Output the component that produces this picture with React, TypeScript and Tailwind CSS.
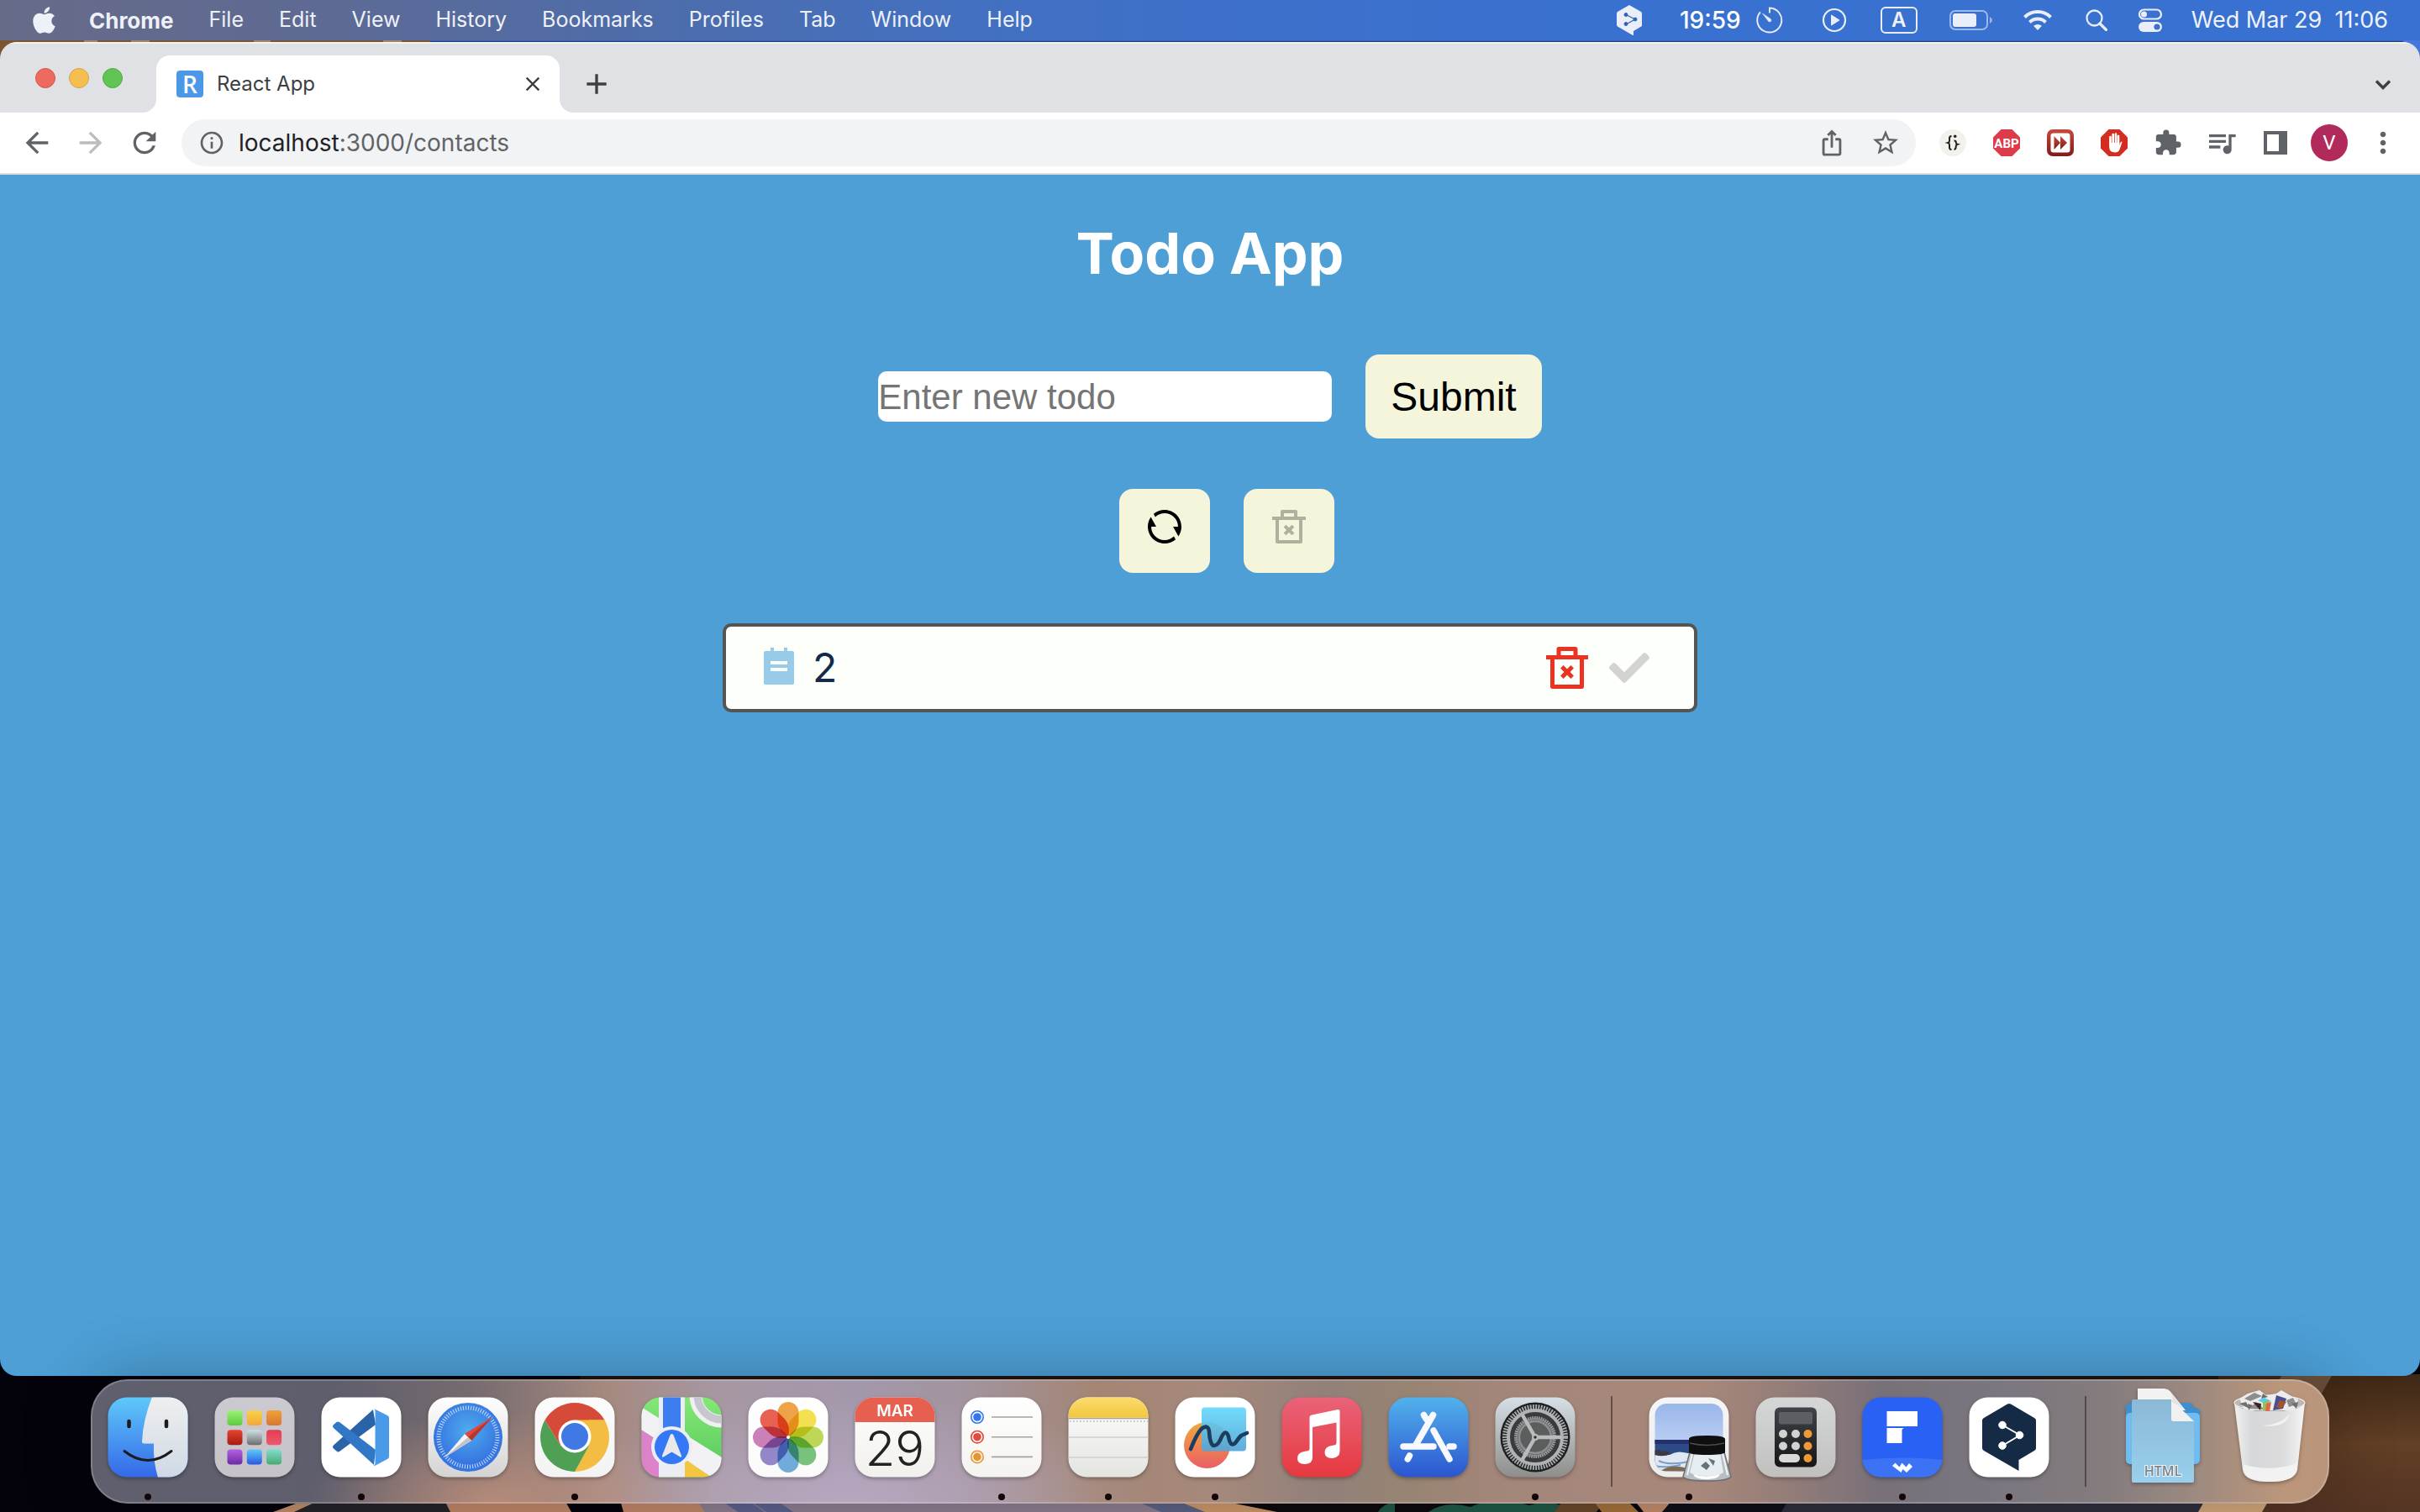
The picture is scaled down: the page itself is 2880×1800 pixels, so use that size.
import type { ReactNode } from "react";
import { FaApple, FaCheck } from "react-icons/fa";
import {
  MdAdd,
  MdArrowBack,
  MdArrowForward,
  MdClose,
  MdExtension,
  MdInfoOutline,
  MdIosShare,
  MdMoreVert,
  MdQueueMusic,
  MdRefresh,
  MdStarBorder,
} from "react-icons/md";
import { RiDeleteBin2Line, RiRefreshLine, RiTodoFill } from "react-icons/ri";

const menus = ["File", "Edit", "View", "History", "Bookmarks", "Profiles", "Tab", "Window", "Help"];

function Wallpaper() {
  return (
    <svg
      aria-hidden="true"
      className="absolute inset-0 -z-10 h-full w-full"
      viewBox="0 0 2880 1800"
      preserveAspectRatio="none"
    >
      <defs>
        <linearGradient id="wpRight" x1="0" y1="0" x2="0" y2="1">
          <stop offset="0" stopColor="#3d2715" />
          <stop offset="0.5" stopColor="#623f25" />
          <stop offset="1" stopColor="#543424" />
        </linearGradient>
      </defs>
      <rect width="2880" height="1800" fill="#04030c" />
      <rect width="512" height="90" fill="#7d5430" />
      <rect x="512" width="2368" height="49" fill="#3f63b0" />
      <rect x="512" y="49" width="2368" height="60" fill="#1f3a78" />
      <path d="M2860 40h20v60h-20z" fill="#4576dc" />
      <path d="M100 40h16v12h-16zM156 40h22v12h-22zM302 40h20v12h-20zM456 40h22v12h-22z" fill="#a58663" />
      <path d="M690 1636H2880V1650H690z" fill="#22150d" />
      <path d="M2640 1636H2880V1800H2640z" fill="url(#wpRight)" />
      <path d="M2716 1636h60l-34 60h-60z" fill="#6b513c" />
      <path d="M325 1800l38-14h60l-40 14z" fill="#c4906b" />
      <path d="M350 1800l30-14h150l6 14z" fill="#26242b" />
      <path d="M529 1786h320v14H536z" fill="#c4896a" />
      <path d="M672 1786h66l4 14h-62z" fill="#04030c" />
      <path d="M830 1786h600v14H838z" fill="#8f8093" />
      <path d="M858 1786h32l20 14h-32zM892 1786h32l20 14h-32z" fill="#5d6390" />
      <path d="M1350 1786h60l50 14h-78z" fill="#5f6487" />
      <path d="M1400 1786h60l70 14h-96z" fill="#d09a6c" />
      <path d="M1450 1786h440v14h-370z" fill="#0e0b10" />
      <path d="M1700 1800q20-14 50-6q30-14 70-2q30-10 50 8zM1640 1800q6-10 20-12v12z" fill="#1f5a48" />
      <path d="M1860 1786h50l-10 14h-50z" fill="#6b4a2b" />
      <path d="M1896 1786h40l14 14h-44z" fill="#a8743e" />
      <path d="M1945 1786h45l-10 14h-24z" fill="#c58f6c" />
      <path d="M1990 1786h140l-6 14h-146z" fill="#10101a" />
      <path d="M2128 1786h500v14h-508z" fill="#2f303d" />
      <path d="M2624 1786h76l-8 14h-76z" fill="#d5a97c" />
    </svg>
  );
}

function DeeplMark() {
  return (
    <svg viewBox="0 0 30 36" className="h-9 w-[30px]" aria-hidden="true">
      <path d="M15 0l14 8q1 1 1 2v15l-10 6v5.500L1 25.500q-1-1-1-2V10q0-1 1-2z" fill="#e9eef8" />
      <g fill="#2f62ba" stroke="#2f62ba">
        <path d="M11 11.500l11 5.500-11 6" fill="none" strokeWidth="1.200" />
        <circle cx="11" cy="11.500" r="2" />
        <circle cx="22" cy="17" r="2" />
        <circle cx="11" cy="22.500" r="2" />
      </g>
    </svg>
  );
}

function StatusIcons() {
  return (
    <>
      <button type="button" aria-label="Timer" className="flex items-center gap-[18px] text-[28px] font-medium text-white">
        19:59
        <svg viewBox="0 0 32 32" className="h-8 w-8" fill="none" stroke="#e9eef8" aria-hidden="true">
          <path d="M16 7.500V1.500a14.500 14.500 0 1 1-11 4.800" strokeWidth="1.900" />
          <path d="M7.500 8l10 6.800a2 2 0 0 1-2.800 2.800z" fill="#e9eef8" strokeWidth="0.500" />
        </svg>
      </button>
      <button type="button" aria-label="Now playing" className="ml-[46px]">
        <svg viewBox="0 0 30 30" className="h-[30px] w-[30px]" aria-hidden="true">
          <circle cx="15" cy="15" r="13" fill="none" stroke="#e9eef8" strokeWidth="2.200" />
          <path d="M11.500 9v12l9.500-6z" fill="#e9eef8" stroke="#e9eef8" strokeLinejoin="round" />
        </svg>
      </button>
      <button
        type="button"
        aria-label="Input source"
        className="ml-10 flex h-8 w-11 items-center justify-center rounded-md border-2 border-[#e9eef8] text-[24px] leading-none font-semibold"
      >
        A
      </button>
      <button type="button" aria-label="Battery" className="ml-[38px]">
        <svg viewBox="0 0 52 24" className="h-6 w-[52px]" aria-hidden="true">
          <rect x="1" y="1" width="44" height="22" rx="6" fill="none" stroke="#9db8e8" strokeWidth="2" />
          <rect x="4" y="4" width="28" height="16" rx="3" fill="#e9eef8" />
          <path d="M48 8q6 4 0 8z" fill="#9db8e8" />
        </svg>
      </button>
      <button type="button" aria-label="Wi-Fi" className="ml-9">
        <svg viewBox="0 0 34 26" className="h-[26px] w-[34px]" fill="none" stroke="#e9eef8" strokeWidth="4" aria-hidden="true">
          <path d="M1.500 9.500a22 22 0 0 1 31 0" />
          <path d="M7.500 15.500a13.500 13.500 0 0 1 19 0" />
          <path d="M17 25l-5-5.200q5-3.600 10 0z" fill="#e9eef8" stroke="none" />
        </svg>
      </button>
      <button type="button" aria-label="Search" className="ml-10">
        <svg viewBox="0 0 26 26" className="h-[26px] w-[26px]" fill="none" stroke="#e9eef8" aria-hidden="true">
          <circle cx="10.500" cy="10.500" r="9" strokeWidth="2.300" />
          <path d="M17 17l7.500 7.500" strokeWidth="3.200" strokeLinecap="round" />
        </svg>
      </button>
      <button type="button" aria-label="Control Center" className="ml-9">
        <svg viewBox="0 0 30 28" className="h-7 w-[30px]" aria-hidden="true">
          <rect x="2" y="1.500" width="26" height="11" rx="5.500" fill="none" stroke="#e9eef8" strokeWidth="2.200" />
          <circle cx="7.500" cy="7" r="3.500" fill="#e9eef8" />
          <rect x="1" y="16" width="28" height="12" rx="6" fill="#e9eef8" />
          <circle cx="23" cy="22" r="3.600" fill="#3871d1" />
        </svg>
      </button>
    </>
  );
}

function MenuBar() {
  return (
    <header className="flex h-12 shrink-0 items-center justify-between bg-[linear-gradient(90deg,#666b88_0%,#5f6a92_12%,#4e6ca9_26%,#4470be_38%,#3e70ca_50%,#3971d0_66%,#3871d1_100%)] pr-[38px] pl-[39px] text-[25px] text-[#eef1f7] [text-shadow:0_3px_6px_rgba(0,0,0,0.25)]">
      <nav aria-label="Menu bar" className="flex items-center gap-[42px]">
        <button type="button" aria-label="Apple menu" className="-mr-[2px]">
          <FaApple className="h-9 w-[27px]" />
        </button>
        <button type="button" className="text-[26px] font-bold">
          Chrome
        </button>
        {menus.map((m) => (
          <button key={m} type="button">
            {m}
          </button>
        ))}
      </nav>
      <div className="flex items-center">
        <button type="button" aria-label="DeepL" className="mr-[45px]">
          <DeeplMark />
        </button>
        <StatusIcons />
        <button type="button" className="ml-[34px] text-[27px] whitespace-pre">
          {"Wed Mar 29  11:06"}
        </button>
      </div>
    </header>
  );
}

function TabStrip() {
  return (
    <div className="flex h-[84px] shrink-0 items-end justify-between border-t-2 border-[#f1f2f4] bg-[#dfe1e5]">
      <div className="flex h-full items-end">
        <div className="mb-[29px] ml-[42px] flex gap-4">
          <button type="button" aria-label="Close window" className="h-6 w-6 rounded-full border border-[#d35549] bg-[#ed6a5e]" />
          <button type="button" aria-label="Minimize window" className="h-6 w-6 rounded-full border border-[#d8a243] bg-[#f4bf4f]" />
          <button type="button" aria-label="Zoom window" className="h-6 w-6 rounded-full border border-[#4fab40] bg-[#61c554]" />
        </div>
        <svg className="ml-6 h-4 w-4" viewBox="0 0 16 16" aria-hidden="true">
          <path d="M16 0v16H0A16 16 0 0 0 16 0z" fill="#fff" />
        </svg>
        <div className="flex h-[68px] w-[480px] items-center rounded-t-2xl bg-white pr-[18px] pl-6">
          <span className="flex h-8 w-8 items-center justify-center rounded-sm bg-[#4b98e8] font-['Open_Sans'] text-[28px] leading-none font-semibold text-white">
            R
          </span>
          <span className="ml-4 flex-1 text-[24px] text-[#3c4043]">React App</span>
          <button type="button" aria-label="Close tab" className="text-[#3c4043]">
            <MdClose className="h-7 w-7" />
          </button>
        </div>
        <svg className="h-4 w-4" viewBox="0 0 16 16" aria-hidden="true">
          <path d="M0 0v16h16A16 16 0 0 1 0 0z" fill="#fff" />
        </svg>
        <button type="button" aria-label="New tab" className="mb-[14px] ml-2 text-[#3c4043]">
          <MdAdd className="h-10 w-10" />
        </button>
      </div>
      <button type="button" aria-label="Search tabs" className="mr-[34px] mb-[27px]">
        <svg viewBox="0 0 20 12" className="h-3 w-5" fill="none" stroke="#3c4043" strokeWidth="3.400" aria-hidden="true">
          <path d="M2 1.500l8 8 8-8" />
        </svg>
      </button>
    </div>
  );
}

const octagon = "M9.500 0h13L32 9.500v13L22.500 32h-13L0 22.500v-13z";

function Extension({ label, children }: { label: string; children: ReactNode }) {
  return (
    <button type="button" aria-label={label} className="flex w-16 items-center justify-center text-[#5f6368]">
      {children}
    </button>
  );
}

function Toolbar() {
  return (
    <div className="flex h-[74px] shrink-0 items-center border-b-2 border-[#dadce0] bg-white pr-3 pl-3">
      <Extension label="Back">
        <MdArrowBack className="h-10 w-10" />
      </Extension>
      <Extension label="Forward">
        <MdArrowForward className="h-10 w-10 text-[#babcbe]" />
      </Extension>
      <Extension label="Reload">
        <MdRefresh className="h-10 w-10" />
      </Extension>
      <div className="ml-3 flex h-14 flex-1 items-center rounded-full bg-[#f1f3f4] pr-[18px] pl-5 text-[#5f6368]">
        <MdInfoOutline className="h-8 w-8 shrink-0" />
        <a href="#contacts" className="ml-4 flex-1 text-[28px]">
          <span className="text-[#202124]">localhost</span>:3000/contacts
        </a>
        <button type="button" aria-label="Share" className="mr-[29px]">
          <MdIosShare className="h-[34px] w-[34px]" />
        </button>
        <button type="button" aria-label="Bookmark this page">
          <MdStarBorder className="h-9 w-9" />
        </button>
      </div>
      <div className="ml-3 flex">
        <Extension label="JSON formatter">
          <svg viewBox="0 0 32 32" className="h-8 w-8">
            <circle cx="16" cy="16" r="16" fill="#f2f1ec" />
            <g fill="none" stroke="#222" strokeWidth="2">
              <path d="M14.500 8q-2.500 0-2.500 2.500v3q0 2-1.800 2.500 1.800.5 1.800 2.500v3q0 2.500 2.500 2.500" />
              <path d="M17.500 13.500q2.500 0 2.300 2.200 0 1.600 1.800 2.100-1.800.5-1.800 2.300 0 3.900-2.300 3.900" />
            </g>
            <circle cx="18.700" cy="8.200" r="1.800" fill="#222" />
          </svg>
        </Extension>
        <Extension label="Adblock Plus">
          <svg viewBox="0 0 32 32" className="h-8 w-8">
            <path d={octagon} fill="#dd3a4b" />
            <text x="16" y="21.500" fontSize="15" fontWeight="700" textAnchor="middle" fill="#fff" fontFamily="Roboto">
              ABP
            </text>
          </svg>
        </Extension>
        <Extension label="Fast forward">
          <svg viewBox="0 0 32 32" className="h-8 w-8">
            <defs>
              <linearGradient id="ffGrad" x1="0" y1="0" x2="0" y2="1">
                <stop offset="0" stopColor="#c8483c" />
                <stop offset="1" stopColor="#7d1c18" />
              </linearGradient>
            </defs>
            <rect width="32" height="32" rx="7" fill="url(#ffGrad)" />
            <rect x="4.500" y="4.500" width="23" height="23" rx="3" fill="#fff" />
            <path d="M8.500 8l7.500 8-7.500 8zM16 8l8 8-8 8z" fill="url(#ffGrad)" />
          </svg>
        </Extension>
        <Extension label="AdBlock">
          <svg viewBox="0 0 32 32" className="h-8 w-8">
            <path d={octagon} fill="#d32d20" />
            <g stroke="#fff" strokeWidth="2.600" strokeLinecap="round" fill="none">
              <path d="M11.500 9v9M14.700 6v11M18 5.500V17M21 8v10" />
            </g>
            <path d="M10.200 16h12v3l1.600-4q1.500-1.300 1.700.5l-3 8.500q-1.500 3.500-5.500 3.500-6.800 0-6.800-6.500z" fill="#fff" />
          </svg>
        </Extension>
        <Extension label="Extensions">
          <MdExtension className="h-[34px] w-[34px]" />
        </Extension>
        <Extension label="Media controls">
          <MdQueueMusic className="h-10 w-10" />
        </Extension>
        <Extension label="Side panel">
          <svg viewBox="0 0 28 28" className="h-7 w-7">
            <path d="M0 0h28v28H0zM4 4v20h14V4z" fill="#5f6368" fillRule="evenodd" />
          </svg>
        </Extension>
        <Extension label="Profile">
          <span className="flex h-11 w-11 items-center justify-center rounded-full bg-[#b02a5b] font-[Roboto] text-2xl text-white">
            V
          </span>
        </Extension>
        <Extension label="More">
          <MdMoreVert className="h-10 w-10" />
        </Extension>
      </div>
    </div>
  );
}

function TodoApp() {
  return (
    <main className="flex flex-1 flex-col items-center bg-[#4d9fd6] pt-12">
      <h1 className="text-[68px] leading-[90px] font-bold text-white">Todo App</h1>
      <form className="mt-[76px] flex items-center gap-10" onSubmit={(e) => e.preventDefault()}>
        <input
          type="text"
          aria-label="New todo"
          placeholder="Enter new todo"
          className="h-[60px] w-[540px] rounded-[10px] bg-white font-['Liberation_Sans'] text-[42px] text-black placeholder:text-[#757575]"
        />
        <button type="submit" className="h-[100px] rounded-2xl bg-[#f5f5dc] px-[30px] pt-[2px] font-['Liberation_Sans'] text-5xl text-black">
          Submit
        </button>
      </form>
      <div className="mt-[60px] flex gap-10 pl-10">
        <button type="button" aria-label="Reset todos" className="h-[100px] rounded-2xl bg-[#f5f5dc] px-[30px] pb-[10px] text-black">
          <RiRefreshLine className="h-12 w-12" />
        </button>
        <button
          type="button"
          disabled
          aria-label="Clear completed todos"
          className="h-[100px] rounded-2xl bg-[#f5f5dc] px-[30px] pb-[10px] text-[#b0b09f]"
        >
          <RiDeleteBin2Line className="h-12 w-12" />
        </button>
      </div>
      <ul className="mt-[60px] w-[1160px]">
        <li className="flex h-[106px] items-center rounded-[10px] border-4 border-[#555] bg-[#fcfffa] pr-[53px] pl-[39px]">
          <RiTodoFill className="h-12 w-12 shrink-0 text-[#98cbe9]" />
          <span className="ml-4 flex-1 text-5xl text-[#152a4a]">2</span>
          <button type="button" aria-label="Delete todo" className="text-[#ea3323]">
            <RiDeleteBin2Line className="h-[60px] w-[60px]" />
          </button>
          <button type="button" aria-label="Complete todo" className="ml-5 text-[#d3d3d3]">
            <FaCheck className="h-12 w-12" />
          </button>
        </li>
      </ul>
    </main>
  );
}

function Grad({ id, from, to }: { id: string; from: string; to: string }) {
  return (
    <linearGradient id={id} x1="0" y1="0" x2="0" y2="1">
      <stop offset="0" stopColor={from} />
      <stop offset="1" stopColor={to} />
    </linearGradient>
  );
}

function Tile({ id, from, to, children }: { id: string; from: string; to: string; children?: ReactNode }) {
  return (
    <svg viewBox="0 0 96 96" className="h-24 w-24 overflow-visible drop-shadow-[0_2px_2px_rgba(0,0,0,0.3)]" aria-hidden="true">
      <defs>
        <Grad id={id} from={from} to={to} />
        <clipPath id={`${id}Clip`}>
          <rect x="0.500" y="0.500" width="95" height="95" rx="22" />
        </clipPath>
      </defs>
      <g clipPath={`url(#${id}Clip)`}>
        <rect width="96" height="96" fill={`url(#${id})`} />
        {children}
      </g>
    </svg>
  );
}

function Finder() {
  return (
    <Tile id="finder" from="#5fc9fa" to="#3468e8">
      <defs>
        <Grad id="finderR" from="#efefef" to="#cfd9e6" />
      </defs>
      <path d="M53 0Q42 28 41 53q0 2.500 2.500 2.500H55Q54 76 60 96h36V0z" fill="url(#finderR)" />
      <g fill="none" stroke="#1c1c1e" strokeLinecap="round">
        <path d="M25.500 29v6M70 29v6" strokeWidth="4.500" />
        <path d="M20 64.500q28 22 56 0" strokeWidth="3" />
      </g>
    </Tile>
  );
}

const pads = [
  ["#9bf27a", "#5ccb3c"],
  ["#f8d24b", "#f0a838"],
  ["#f0a236", "#da7433"],
  ["#e8442f", "#a51c12"],
  ["#cfe0e8", "#6c6c68"],
  ["#e23c52", "#ee5a6c"],
  ["#b35fe0", "#6d2aa6"],
  ["#58ccfa", "#2b55e0"],
  ["#7fdcd0", "#4aa96c"],
];

function Launchpad() {
  return (
    <Tile id="launch" from="#cbcad0" to="#c6c3c8">
      <defs>
        {pads.map(([a, b], i) => (
          <Grad key={a} id={`pad${i}`} from={a} to={b} />
        ))}
      </defs>
      {pads.map(([a], i) => (
        <rect key={a} x={15.500 + (i % 3) * 23.300} y={16 + Math.floor(i / 3) * 23.300} width="18" height="18" rx="4" fill={`url(#pad${i})`} />
      ))}
    </Tile>
  );
}

function VsCode() {
  return (
    <Tile id="vscode" from="#ffffff" to="#ffffff">
      <path d="M62 15l3 18-43 32q-2 1-3.500-.5l-3.500-3q-2-2 0-4z" fill="#2a64a8" />
      <path d="M15 37q-2-2 0-4l3.500-3q1.500-1 3.500 0l43 33-2 18z" fill="#3277c5" />
      <path d="M62 15q1.500-.8 3 0l14 7q2 1 2 3v46q0 2-2 3l-14 7.500q-1.500.8-3.500-.5 3 1 3-2V17q0-3-2.500-2z" fill="#4a9aea" />
    </Tile>
  );
}

function Safari() {
  return (
    <Tile id="safari" from="#ffffff" to="#d3d3d3">
      <defs>
        <radialGradient id="safariDial" cx="0.5" cy="0.4">
          <stop offset="0" stopColor="#4eabee" />
          <stop offset="1" stopColor="#3674e0" />
        </radialGradient>
      </defs>
      <circle cx="48" cy="48" r="41" fill="url(#safariDial)" />
      <circle cx="48" cy="48" r="35" fill="none" stroke="#d5e8fb" strokeWidth="5" strokeDasharray="1.100 1.950" opacity="0.85" />
      <path d="M77 24L52 52l-8-8z" fill="#e0473c" />
      <path d="M77 24L52 52l-4-4z" fill="#b8352c" />
      <path d="M20 72l24-28 8 8z" fill="#f4f4f4" />
      <path d="M20 72l28-24 4 4z" fill="#c4c4c4" />
    </Tile>
  );
}

function Chrome() {
  return (
    <Tile id="chrome" from="#fbfbfb" to="#f3f3f3">
      <path d="M48 48L12.500 27.500A41 41 0 0 1 83.500 27.500z" fill="#d64a39" />
      <path d="M48 89A41 41 0 0 1 12.500 27.500L31 58l17 10z" fill="#4f9f55" />
      <path d="M12.500 27.500L31 58l17-10V27.500z" fill="#d64a39" />
      <path d="M83.500 27.500A41 41 0 0 1 48 89l17-31V27.500z" fill="#f2bd42" />
      <path d="M48 27.500h35.500L65 58 48 89z" fill="#f2bd42" />
      <path d="M31 58l17 31 17-31z" fill="#4f9f55" />
      <circle cx="48" cy="47" r="19.500" fill="#fff" />
      <circle cx="48" cy="47" r="16" fill="#4179e4" />
    </Tile>
  );
}

function Maps() {
  return (
    <Tile id="maps" from="#84e876" to="#56c75c">
      <path d="M0 12l96 60v24H84L0 39z" fill="#f2f2f5" />
      <path d="M0 39l22 14v43H0z" fill="#db82c8" />
      <path d="M52 74l32 22H52z" fill="#f3c63f" />
      <path d="M21 0h31v96H21z" fill="#ecedf2" />
      <path d="M26 0h21v50H26z" fill="#3d7df0" />
      <circle cx="96" cy="-2" r="31" fill="none" stroke="#f0f0f3" strokeWidth="15" />
      <circle cx="96" cy="-2" r="29" fill="none" stroke="#c6c7cf" strokeWidth="9" />
      <circle cx="36.500" cy="59.500" r="24.500" fill="#eceef4" />
      <circle cx="36.500" cy="59.500" r="20.500" fill="#3478f6" />
      <path d="M36.500 44q1.500 0 2 1.500L48 70q.5 2.500-1.500 1.500l-10-6-10 6Q24.500 72.500 25 70l9.500-24.500q.5-1.500 2-1.500z" fill="#e9e9ec" />
    </Tile>
  );
}

const petals = ["#ee9a35", "#f3df3f", "#b9d545", "#6bbf70", "#62a5dd", "#8b7cc4", "#c873b2", "#e8503f"];

function Photos() {
  return (
    <Tile id="photos" from="#ffffff" to="#fafafa">
      {petals.map((c, i) => (
        <path
          key={c}
          d="M48 48Q36 40 35.500 30V18.500a12.500 12.500 0 0 1 25 0V30Q60 40 48 48z"
          fill={c}
          opacity="0.9"
          transform={`rotate(${i * 45} 48 48)`}
          className="mix-blend-multiply"
        />
      ))}
      <circle cx="48" cy="48" r="2" fill="#fff" />
    </Tile>
  );
}

function Calendar() {
  return (
    <Tile id="cal" from="#ffffff" to="#f1f0ec">
      <path d="M0 0h96v30H0z" fill="#e7604f" />
      <text x="48" y="23" fontSize="19" fontWeight="600" textAnchor="middle" fill="#fff" fontFamily="Inter">
        MAR
      </text>
      <text x="48" y="82" fontSize="58" fontWeight="300" textAnchor="middle" fill="#222" fontFamily="Inter">
        29
      </text>
    </Tile>
  );
}

function Reminders() {
  return (
    <Tile id="rem" from="#ffffff" to="#f4f3ef">
      {["#3377f0", "#e24a3b", "#e8942f"].map((c, i) => (
        <g key={c} transform={`translate(0 ${24 + i * 23.700})`}>
          <circle cx="19" cy="0" r="7.200" fill="none" stroke={c} strokeWidth="1.600" />
          <circle cx="19" cy="0" r="4.800" fill={c} />
          <path d="M36 0h49" stroke="#a2a3a5" strokeWidth="1.600" />
        </g>
      ))}
    </Tile>
  );
}

function Notes() {
  return (
    <Tile id="notes" from="#ffffff" to="#e3e3df">
      <defs>
        <Grad id="notesTop" from="#fadd70" to="#f4c63c" />
      </defs>
      <path d="M0 0h96v24.500H0z" fill="url(#notesTop)" />
      <path d="M0 25.500h96" stroke="#a9a48f" strokeWidth="1.600" />
      <path d="M2 29h94" stroke="#b5b5b5" strokeWidth="1.600" strokeDasharray="1.600 2.400" />
      <path d="M0 48h96M0 72h96" stroke="#cfcfcf" strokeWidth="1.600" />
    </Tile>
  );
}

function Freeform() {
  return (
    <Tile id="free" from="#ffffff" to="#ffffff">
      <defs>
        <Grad id="freeC" from="#f0a93c" to="#e95f65" />
        <Grad id="freeS" from="#66d8fb" to="#53a5d8" />
      </defs>
      <circle cx="38.500" cy="57.500" r="27.500" fill="url(#freeC)" />
      <rect x="32" y="12.500" width="53" height="52" rx="4" fill="url(#freeS)" opacity="0.92" />
      <path d="M19 62q8-20 14-25 7-4 8 4 1 17 6 17 5 0 9-11 5-9 8 0 2 13 8 8 4-6 7-9l7-3" fill="none" stroke="#1b3d5e" strokeWidth="4.600" strokeLinecap="round" strokeLinejoin="round" />
    </Tile>
  );
}

function Music() {
  return (
    <Tile id="music" from="#ea6379" to="#e5393f">
      <path
        d="M36 21.500l31-6.500q2.500-.3 2.500 2V64q0 8-8.500 9-9.500.5-9.500-7 0-6.500 8-8l4-.8q2-.5 2-2.500V30.500L37 36v36q0 7.500-8.500 8-9.500.5-9.500-7 0-6.500 8-8l4-.8q2.500-.5 2.500-2.500V24q0-2 2.500-2.500z"
        fill="#fff"
      />
    </Tile>
  );
}

function AppStore() {
  return (
    <Tile id="store" from="#52b2ec" to="#2b55d0">
      <g stroke="#f8f9fc" strokeWidth="7.500" strokeLinecap="round" fill="none">
        <path d="M53.500 21.500L33 57M25.500 70l-2.200 4" />
        <path d="M42.500 21.500l3 5M54 40l19 34" />
        <path d="M18 59h36M73 59h5" />
      </g>
    </Tile>
  );
}

function Settings() {
  return (
    <Tile id="settings" from="#d6e0e6" to="#8d8d8b">
      <circle cx="48" cy="48" r="41.500" fill="#1e1f20" />
      <circle cx="48" cy="48" r="36" fill="none" stroke="#a6a9ab" strokeWidth="6" strokeDasharray="1.900 1.300" />
      <circle cx="48" cy="48" r="32" fill="#3a3b3c" stroke="#b0b3b5" strokeWidth="4" />
      <circle cx="48" cy="48" r="23" fill="#6a6b6b" stroke="#9a9c9e" strokeWidth="4" strokeDasharray="1.700 0.900" />
      <circle cx="48" cy="48" r="19" fill="#5c5d5d" stroke="#8d8f90" strokeWidth="2.500" />
      <path d="M48 48h31M48 48L32.500 21M48 48L32.500 75" stroke="#b9bcbe" strokeWidth="4.500" />
      <circle cx="48" cy="48" r="4" fill="#b9bcbe" />
      <circle cx="48" cy="48" r="1.800" fill="#333" />
    </Tile>
  );
}

function Preview() {
  return (
    <div className="relative">
      <Tile id="preview" from="#f5f5f5" to="#ececec">
        <defs>
          <Grad id="sky" from="#93b2e8" to="#b8cdf2" />
          <clipPath id="photoClip">
            <rect x="7.500" y="8" width="81" height="80.500" rx="14" />
          </clipPath>
        </defs>
        <g clipPath="url(#photoClip)">
          <path d="M0 0h96v52H0z" fill="url(#sky)" />
          <path d="M0 51h96v45H0z" fill="#2c4a86" />
          <path d="M0 51h96v5H0z" fill="#24306b" />
          <path d="M7 69q12-4 18 0 8-5 16-3l12 2v22H7z" fill="#dfe8f2" />
          <path d="M7 64q6-3 9 1 7-2 10 3-8 4-19 1z" fill="#3c3a45" />
          <path d="M12 76q12 6 36 1M8 82q10 3 30-1" stroke="#7c9cc4" strokeWidth="2" fill="none" />
          <path d="M14 88q12-8 28-4l8 5z" fill="#7d6a50" />
        </g>
      </Tile>
      <svg viewBox="0 0 60 56" className="absolute top-[46px] left-[40px] h-14 w-[60px]" aria-hidden="true">
        <path d="M9 20h41l8 29q-4 5-29 5T1 49z" fill="#b9bfc3" stroke="#6c7072" strokeWidth="1.500" />
        <path d="M15 20h30l4 24q-6 4-20 4t-20-4z" fill="#e6eef1" />
        <path d="M22 36l6-5 5 5-4 5zM31 27l8 3-2 6z" fill="#66737d" />
        <path d="M12 21L6 47M48 21l6 26" stroke="#f2f5f6" strokeWidth="2" />
        <path d="M13 46q16 5 32 0-2 6-16 6t-16-6z" fill="#fff" />
        <path d="M8 4q0-4 21-4t22 4v16q-2 3-22 3T8 20z" fill="#0f0f10" />
        <path d="M9 9q20 5 41 0" fill="none" stroke="#4a4a4c" strokeWidth="1.500" />
      </svg>
    </div>
  );
}

function Calculator() {
  return (
    <Tile id="calc" from="#d5d7d7" to="#c0c0bf">
      <defs>
        <Grad id="calcBody" from="#40444a" to="#161616" />
      </defs>
      <rect x="23" y="12.500" width="50" height="71" rx="6" fill="url(#calcBody)" />
      <rect x="28" y="18" width="40" height="14.500" rx="2" fill="#5d6063" />
      {[44, 58.500].map((y) => (
        <g key={y} fill="#d2d2d2">
          <circle cx="33" cy={y} r="5" />
          <circle cx="48" cy={y} r="5" />
          <circle cx="62.500" cy={y} r="5" fill="#f09a37" />
        </g>
      ))}
      <rect x="28" y="68" width="25" height="10" rx="5" fill="#d9d9d9" />
      <circle cx="62.500" cy="73" r="5" fill="#f09a37" />
    </Tile>
  );
}

function PdfElement() {
  return (
    <Tile id="pdf" from="#2a61f5" to="#2a61f5">
      <path d="M29.500 17h36.500v18H29.500zM29.500 37h20l-2 2v16h-18z" fill="#fff" />
      <path d="M0 75q48-5 96 0v21H0z" fill="#3b73f4" />
      <path d="M36 82l3.500-3.500 5 5 3-5 5 5 3.500-4.500 4 4L53 90l-4.500-4-2 4z" fill="#fff" />
    </Tile>
  );
}

function Deepl() {
  return (
    <Tile id="deepl" from="#ffffff" to="#ffffff">
      <path d="M46 8.500q2-1 4 0L78 25q2 1 2 3v33q0 2-2 3L59.500 75v13L18 64q-2-1-2-3V28q0-2 2-3z" fill="#152a45" />
      <g fill="#fff" stroke="#fff">
        <path d="M40 33.500L61 45.500 40 58" fill="none" strokeWidth="2" />
        <circle cx="40" cy="33.500" r="4.300" />
        <circle cx="60.500" cy="45.500" r="4.300" />
        <circle cx="40" cy="58" r="4.300" />
      </g>
    </Tile>
  );
}

function HtmlFolder() {
  return (
    <svg viewBox="0 0 96 96" className="h-24 w-24 overflow-visible drop-shadow-[0_2px_2px_rgba(0,0,0,0.3)]" aria-hidden="true">
      <defs>
        <Grad id="paper" from="#8bb9d6" to="#98d0ee" />
      </defs>
      <rect x="4" y="7" width="80" height="60" rx="5" fill="#3f8fd0" />
      <rect x="40" y="13" width="52" height="50" rx="5" fill="#3f8fd0" />
      <rect x="4" y="19" width="88" height="61" rx="5" fill="#6fbdf0" />
      <path d="M18-10h31q6 0 10 6l16 20H18z" fill="#f2f2f2" />
      <path d="M11 5q0-2 2-2h45v26h27v71q0 2-2 2H13q-2 0-2-2z" fill="url(#paper)" />
      <path d="M58 3l27 26H60q-2 0-2-2z" fill="#f0f0f0" />
      <path d="M56-7q6 10 2 12l14 9z" fill="#e2e2e2" />
      <text x="48" y="94" fontSize="16" fontWeight="600" textAnchor="middle" fill="#7e858a" stroke="#eef4f8" strokeWidth="2" paintOrder="stroke" fontFamily="Open Sans">
        HTML
      </text>
    </svg>
  );
}

function Trash() {
  return (
    <svg viewBox="0 0 96 96" className="h-24 w-24 overflow-visible drop-shadow-[0_2px_2px_rgba(0,0,0,0.3)]" aria-hidden="true">
      <defs>
        <linearGradient id="bin" x1="0" y1="0" x2="1" y2="0">
          <stop offset="0" stopColor="#f1f1f1" />
          <stop offset="0.250" stopColor="#d6d7d8" />
          <stop offset="0.700" stopColor="#dcdcdd" />
          <stop offset="1" stopColor="#f6f6f6" />
        </linearGradient>
      </defs>
      <ellipse cx="48" cy="7" rx="42" ry="9" fill="#bdb8b4" stroke="#eee" strokeWidth="1.200" />
      <path d="M12 2l10-6 14-4 8 6 12-2 6-4 12 7 8 4-4 13H18z" fill="#ececec" />
      <path d="M18 2l12-7 9 4-14 6zM24 14l8-8 10 9zM68 4l8-3 4 8-9 3z" fill="#8d8d8d" />
      <path d="M12 8l8-2 4 8zM40-4l6 4-8 2zM74 8l8-2-2 8zM22 8l6 2-5 6z" fill="#6f6f70" />
      <path d="M28 6l10 2-1 8z" fill="#3a2420" />
      <path d="M34 4l8-3 8 4-8 3z" fill="#5cc7ef" />
      <path d="M40 6l8-2-2 12h-6z" fill="#8cc65a" />
      <path d="M44 8l6-2-2 11h-5z" fill="#df6a45" />
      <path d="M56-2l12 4-4 12-12 2z" fill="#4a4e94" />
      <path d="M60 4l8 2-6 8-6-2z" fill="#a4532f" />
      <path d="M6 7q4 10 42 10T90 7l-9 80q-3 14-33 14T16 87z" fill="url(#bin)" />
      <path d="M16 80q32 10 65-1l-1 8q-3 14-32 14T17 87z" fill="#f4f4f5" opacity="0.9" />
      <path d="M38 34q22 0 34-14-4 18-34 14z" fill="#f2f2f2" />
    </svg>
  );
}

type DockApp = { name: string; icon: () => ReactNode; running?: boolean };

const dockGroups: DockApp[][] = [
  [
    { name: "Finder", icon: Finder, running: true },
    { name: "Launchpad", icon: Launchpad },
    { name: "Visual Studio Code", icon: VsCode, running: true },
    { name: "Safari", icon: Safari },
    { name: "Google Chrome", icon: Chrome, running: true },
    { name: "Maps", icon: Maps },
    { name: "Photos", icon: Photos },
    { name: "Calendar", icon: Calendar },
    { name: "Reminders", icon: Reminders, running: true },
    { name: "Notes", icon: Notes, running: true },
    { name: "Freeform", icon: Freeform, running: true },
    { name: "Music", icon: Music },
    { name: "App Store", icon: AppStore },
    { name: "System Settings", icon: Settings, running: true },
  ],
  [
    { name: "Preview", icon: Preview, running: true },
    { name: "Calculator", icon: Calculator },
    { name: "PDFelement", icon: PdfElement, running: true },
    { name: "DeepL", icon: Deepl, running: true },
  ],
  [
    { name: "HTML folder", icon: HtmlFolder },
    { name: "Trash", icon: Trash },
  ],
];

function Dock() {
  return (
    <nav
      aria-label="Dock"
      className="mx-auto mt-1 mb-[10px] flex h-[148px] w-fit shrink-0 rounded-[44px] border-2 border-white/20 bg-[radial-gradient(ellipse_220px_110px_at_18%_100%,rgba(196,146,124,0.8),transparent),radial-gradient(ellipse_360px_130px_at_34%_100%,rgba(190,174,200,0.7),transparent),linear-gradient(90deg,#5f5f6d_0%,#5f5e6c_11%,#766b6f_17%,#a5897f_23%,#a697a2_28%,#a398ab_34%,#a2949f_39%,#a38574_45%,#a6897b_50%,#92807a_55%,#988472_59%,#a3867a_63%,#a7887b_72%,#937c78_76%,#777079_80%,#7a7680_85%,#847c7d_90%,#9d8a80_94%,#bb967a_98%,#b9957c_100%)] bg-origin-border pr-[6px] pl-[2px] shadow-[0_0_80px_rgba(0,0,0,0.28)]"
    >
      {dockGroups.map((group, g) => (
        <div key={group[0].name} className="flex">
          {g > 0 && (
            <div className="flex w-14 justify-center pt-[18px]">
              <span className="h-[108px] w-[2px] bg-[#3a2420]/60" />
            </div>
          )}
          {group.map(({ name, icon: Icon, running }) => (
            <button key={name} type="button" aria-label={name} className="flex w-[127px] flex-col items-center justify-start pt-[19px]">
              <Icon />
              {running && <span className="mt-[19px] h-2 w-2 rounded-full bg-[#120608]" />}
            </button>
          ))}
        </div>
      ))}
    </nav>
  );
}

export default function App() {
  return (
    <div className="relative isolate flex min-h-screen flex-col overflow-hidden font-[Inter,sans-serif]">
      <Wallpaper />
      <MenuBar />
      <section aria-label="Browser window" className="mt-[2px] flex flex-1 flex-col overflow-hidden rounded-[20px]">
        <TabStrip />
        <Toolbar />
        <TodoApp />
      </section>
      <Dock />
    </div>
  );
}
